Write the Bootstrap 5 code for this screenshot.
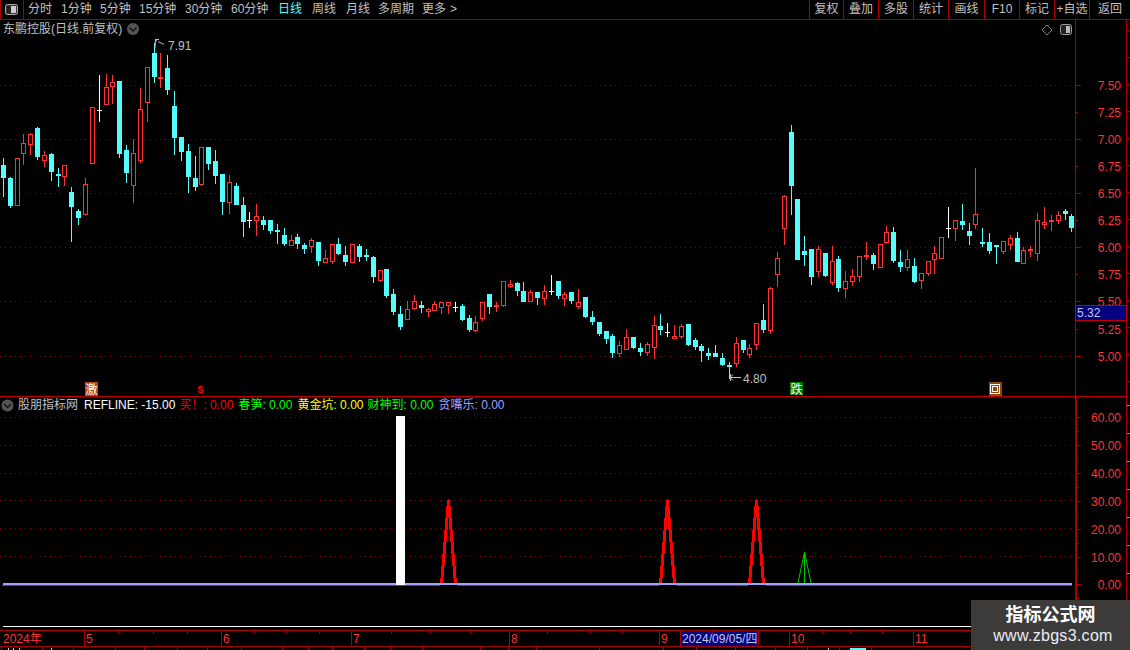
<!DOCTYPE html>
<html lang="zh"><head><meta charset="utf-8"><title>东鹏控股</title>
<link rel="stylesheet" href="https://cdn.jsdelivr.net/npm/bootstrap@5.3.0/dist/css/bootstrap.min.css">
<style>
:root{--fr:#a80000;--lb:#ff3232;--tx:#c0c0c0;}
html,body{background:#000;margin:0;}
.term{width:1130px;height:650px;overflow:hidden;position:relative;background:#000;color:var(--tx);font:12px/1 "Liberation Sans","Noto Sans CJK SC",sans-serif;}
.bar{height:20px;border-bottom:1px solid var(--fr);}
.tog{width:24px;border-right:1px solid var(--fr);border-left:1px solid var(--fr);}
.tl{position:absolute;top:3px;white-space:nowrap;}
.barwrap{position:relative;height:20px;flex:none;}
.rbtn{border-left:1px solid var(--fr);height:19px;line-height:19px;text-align:center;}
.sel{color:#54fcfc;}
.pane{display:flex;flex:none;}
.pane svg{display:block;}
.over{position:absolute;white-space:nowrap;line-height:14px;}
.plot{position:relative;width:1075px;}
text{font:12px "Liberation Sans","Noto Sans CJK SC",sans-serif;}
.lg{display:flex;align-items:center;}
.timeline{height:17px;flex:none;border-top:1px solid var(--fr);border-bottom:1px solid var(--fr);position:relative;color:var(--lb);}
.tlab{position:absolute;top:2px;}
.tsep{position:absolute;top:0;bottom:0;width:1px;background:var(--fr);}
.ttick{position:absolute;top:0;height:3px;width:1px;background:var(--fr);}
.dbox{position:absolute;top:0;bottom:0;left:680px;width:79px;background:#000080;color:#c8c8e8;border-left:1px solid var(--fr);border-right:1px solid var(--fr);padding:2px 0 0 1px;white-space:nowrap;}
.wm{position:absolute;left:971px;top:600px;width:159px;height:50px;background:#3d3a3a;color:#fff;}
.wm1{font-size:18px;line-height:20px;font-weight:700;margin-top:5px;}
.wm2{font-size:16px;line-height:16px;letter-spacing:.3px;margin-top:3px;padding-left:5px;color:#e8eef6;}
.gap3{height:3px;flex:none;}
.foot{height:3px;flex:none;}
.foot svg{display:block;}
</style></head>
<body>
<div class="term d-flex flex-column">
  <div class="bar barwrap d-flex">
    <div class="tog d-flex align-items-center justify-content-center">
      <svg width="14" height="12" viewBox="0 0 14 12"><rect x=".5" y=".5" width="12" height="10" rx="2" fill="#333" stroke="#aaa"/><rect x="6" y="2" width="5" height="7" fill="#ccc"/><rect x="2" y="2" width="4" height="7" fill="#222"/></svg>
    </div>
    <span class="tl" style="left:28px">分时</span>
    <span class="tl" style="left:61px">1分钟</span>
    <span class="tl" style="left:100px">5分钟</span>
    <span class="tl" style="left:139px">15分钟</span>
    <span class="tl" style="left:185px">30分钟</span>
    <span class="tl" style="left:231px">60分钟</span>
    <span class="tl sel" style="left:278px">日线</span>
    <span class="tl" style="left:312px">周线</span>
    <span class="tl" style="left:346px">月线</span>
    <span class="tl" style="left:378px">多周期</span>
    <span class="tl" style="left:422px">更多<span class="ms-1">&gt;</span></span>
    <div class="ms-auto d-flex">
      <div class="rbtn" style="width:34px">复权</div>
      <div class="rbtn" style="width:35px">叠加</div>
      <div class="rbtn" style="width:35px">多股</div>
      <div class="rbtn" style="width:35px">统计</div>
      <div class="rbtn" style="width:36px">画线</div>
      <div class="rbtn" style="width:35px">F10</div>
      <div class="rbtn" style="width:35px">标记</div>
      <div class="rbtn" style="width:35px">+自选</div>
      <div class="rbtn" style="width:41px">返回</div>
    </div>
  </div>
  <div class="pane" style="height:377px">
    <div class="plot">
      <svg id="main" width="1075" height="377" viewBox="0 20 1075 377"></svg>
      <div class="over d-flex align-items-center" style="left:3px;top:2px">东鹏控股(日线.前复权)
        <svg class="ms-1" width="14" height="14" viewBox="0 0 14 14"><circle cx="7" cy="7" r="6" fill="#555"/><path d="M3.5 5.5 7 9l3.5-3.5" fill="none" stroke="#111" stroke-width="1.3"/></svg>
      </div>
    </div>
    <svg id="yaxm" width="55" height="377" viewBox="1075 20 55 377"></svg>
  </div>
  <div class="pane" style="height:230px">
    <div class="plot">
      <svg id="sub" width="1075" height="230" viewBox="0 397 1075 230"></svg>
      <div class="over lg" style="left:1px;top:1px">
        <svg width="13" height="13" viewBox="0 0 13 13"><circle cx="6.5" cy="6.5" r="6" fill="#555"/><path d="M3 5 6.5 8.5 10 5" fill="none" stroke="#111" stroke-width="1.3"/></svg>
        <span class="ms-1">股朋指标网</span>
        <span style="margin-left:6px;color:#fff">REFLINE: -15.00</span>
        <span style="margin-left:4px;color:#f00">买！: 0.00</span>
        <span style="margin-left:5px;color:#0f0">春笋: 0.00</span>
        <span style="margin-left:5px;color:#ff0">黄金坑: 0.00</span>
        <span style="margin-left:4px;color:#0f0">财神到: 0.00</span>
        <span style="margin-left:5px;color:#a0a0ff">贪嘴乐: 0.00</span>
      </div>
    </div>
    <svg id="yaxs" width="55" height="230" viewBox="1075 397 55 230"></svg>
  </div>
  <div class="gap3"></div>
  <div class="timeline" id="tl">
    <span class="tlab" style="left:3px">2024年</span><span class="tlab" style="left:86px">5</span><span class="tlab" style="left:223px">6</span><span class="tlab" style="left:353px">7</span><span class="tlab" style="left:511px">8</span><span class="tlab" style="left:661px">9</span><span class="tlab" style="left:791px">10</span><span class="tlab" style="left:915px">11</span>
    <div class="dbox">2024/09/05/四</div>
  </div>
  <div class="foot"><svg id="ft" width="1130" height="3"></svg></div>
  <div class="wm text-center"><div class="wm1">指标公式网</div><div class="wm2">www.zbgs3.com</div></div>
</div>
<script>
const C=[
'c,165,178,158,197','c,178,206,177,208','r,158,206,158,206','r,143,154,134,165','r,134,145,133,155','c,128,157,127,160','r,155,161,151,167','c,154,172,153,181','c,174,176,168,187','r,165,177,165,186',
'c,192,207,187,242','c,211,218,209,225','r,184,215,178,215','r,107,164,107,164','w,110,111,75,122','r,87,105,74,105','r,82,87,75,104','c,81,154,81,158','c,150,173,145,183','r,153,186,139,203',
'r,109,161,88,163','r,67,103,67,122','c,53,77,43,83','r,77,79,53,88','c,68,90,55,95','c,106,138,91,155','c,137,152,137,161','c,151,177,144,193','c,178,187,156,191','r,147,185,147,186',
'c,147,164,147,170','c,161,176,150,184','c,174,202,174,215','r,182,203,175,214','c,186,205,183,205','c,205,222,197,237','w,220,221,212,228','r,216,221,204,236','c,220,225,216,230','c,220,231,220,234',
'c,230,232,224,244','c,235,244,228,246','r,240,246,235,246','c,237,244,234,249','c,245,249,243,254','r,240,247,238,253','c,242,261,242,266','r,258,263,250,263','r,244,262,244,264','c,244,254,238,255',
'c,255,262,246,266','r,244,263,244,263','c,246,257,244,262','c,255,257,249,261','c,257,277,256,283','r,270,281,270,282','c,269,296,269,298','c,294,312,289,315','c,314,327,306,330','r,309,320,301,320',
'r,301,309,295,310','c,305,308,301,313','r,309,312,308,317','r,304,311,301,311','r,302,308,302,314','r,302,306,302,314','w,307,308,302,312','c,306,320,304,321','c,318,330,315,332','r,322,331,316,332',
'r,302,319,302,321','c,294,307,294,314','r,305,307,302,312','r,281,306,281,307','r,284,287,280,288','c,283,291,282,296','c,291,302,282,302','r,292,302,290,302','c,292,298,292,305','r,291,299,285,305',
'w,291,292,275,295','c,281,296,281,299','r,294,299,292,306','c,292,301,292,304','r,302,307,289,309','c,297,317,297,318','c,317,322,311,325','c,322,334,322,336','c,331,339,331,344','c,336,353,334,358',
'r,345,354,341,357','r,337,350,329,350','c,337,348,337,349','c,348,352,343,356','r,344,353,342,356','r,325,348,316,359','c,326,330,314,335','w,332,333,323,337','r,336,339,325,339','r,326,337,324,339',
'c,324,345,324,346','c,340,347,338,350','c,346,351,344,362','c,353,356,348,360','c,353,357,345,357','c,358,365,353,366','c,365,366,362,379','r,343,364,337,367','c,340,350,340,353','r,348,355,344,358',
'r,323,345,323,350','c,320,330,304,333','r,288,331,287,334','r,258,275,252,287','r,196,229,195,245','c,132,186,125,215','c,199,260,199,260','c,251,255,236,266','c,249,277,249,285','r,249,272,246,277',
'c,253,276,253,277','r,261,283,246,285','c,259,288,256,292','r,281,289,271,298','r,276,282,269,286','r,256,277,256,282','r,255,257,242,260','c,255,264,253,270','r,244,268,244,268','r,232,243,226,244',
'c,232,261,227,263','c,262,267,250,272','r,259,268,250,271','c,266,282,258,283','r,273,281,273,289','r,261,274,261,276','r,253,260,246,274','r,237,259,237,259','w,228,229,207,238','r,220,229,220,241',
'c,221,225,204,230','c,231,236,223,245','r,214,225,168,229','c,242,244,228,247','c,242,251,233,254','c,245,247,245,264','r,241,252,241,254','r,238,245,235,250','c,238,262,232,262','r,250,264,247,264',
'r,249,251,246,257','r,220,254,213,261','r,222,225,207,229','r,220,222,215,231','r,215,221,211,224','c,211,214,209,220','c,216,228,214,232'];
const CY='#54fcfc',RD='#ff3232',FR='#a80000',LB='#ff3232';
let s='';
[85,139,193,247,301,356].forEach(y=>s+=`<line x1="0" x2="1075" y1="${y+.5}" y2="${y+.5}" stroke="#8c0000" stroke-dasharray="1 4"/>`);
C.forEach((d,i)=>{
 const [t,a,b,h,l]=d.split(',');const T=+a,B=+b,H=+h,L=+l;
 const x=Math.floor(3.3+6.85*i);
 const col=t=='c'?CY:t=='r'?RD:'#fff';
 if(t=='w'){s+=`<rect x="${x}" y="${H}" width="1" height="${L-H}" fill="#fff"/><rect x="${x-2}" y="${T}" width="5" height="1" fill="#fff"/>`;return;}
 s+=`<rect x="${x}" y="${H}" width="1" height="${Math.max(L-H,1)}" fill="${col}"/>`;
 if(t=='c')s+=`<rect x="${x-2}" y="${T}" width="5" height="${Math.max(B-T,2)}" fill="${CY}"/>`;
 else s+=`<rect x="${x-1.5}" y="${T+.5}" width="4" height="${Math.max(B-T-1,1)}" fill="#000" stroke="${RD}"/>`;
});
s+=`<path d="M155 42.5 157 39.5M155 39.5h4M155.5 40 155 48" stroke="#c0c0c0" fill="none"/><path d="M158 42c3 0 3 2 6 2" stroke="#c0c0c0" fill="none"/><text x="168" y="50" fill="#c0c0c0">7.91</text>`;
s+=`<path d="M730.5 374V381M730 377.5h11M730 377.5l3-3M730 377.5l3 3" stroke="#c0c0c0" fill="none"/><text x="743" y="383" fill="#c0c0c0">4.80</text>`;
s+=`<rect x="85" y="382" width="13" height="14" fill="#b04a10"/><text x="85.5" y="394" fill="#fff">激</text>`;
s+=`<text x="197" y="393" fill="#f00" style="font-weight:700;font-family:'Liberation Mono',monospace;font-size:11.5px">$</text>`;
s+=`<rect x="790" y="382" width="13" height="13" fill="#007a00"/><text x="790.5" y="393.5" fill="#fff">跌</text>`;
s+=`<rect x="989" y="382" width="13" height="14" fill="#8a4a10"/><rect x="990.5" y="384.5" width="9" height="9" fill="none" stroke="#fff"/><rect x="992.5" y="386.5" width="5" height="5" fill="#8a4a10" stroke="#fff"/>`;
s+=`<path d="M1047 25l5 5-5 5-5-5z" fill="none" stroke="#888"/><rect x="1060.5" y="24.5" width="11" height="10" rx="2" fill="#222" stroke="#999"/><rect x="1066" y="26" width="4" height="7" fill="#bbb"/>`;
s+=`<line x1="0" x2="1075" y1="396.5" y2="396.5" stroke="#c00000"/>`;
document.getElementById('main').innerHTML=s;

let a=`<rect x="1075" y="20" width="1" height="377" fill="${FR}"/><rect x="1126" y="20" width="1" height="377" fill="${FR}"/>`;
[['7.50',85],['7.25',112],['7.00',139],['6.75',166],['6.50',193],['6.25',220],['6.00',247],['5.75',274],['5.50',301],['5.25',329],['5.00',356]].forEach(([t,y],i)=>{
 a+=`<rect x="1076" y="${y}" width="${i%2?2:5}" height="1" fill="${FR}"/><text x="1121" y="${y+5}" text-anchor="end" fill="${LB}">${t}</text>`;
});
for(let y=30;y<397;y+=27)a+=`<rect x="1127" y="${y}" width="3" height="1" fill="${FR}"/>`;
a+=`<rect x="1075.5" y="305.5" width="51" height="15" fill="#000080" stroke="#c00000"/><text x="1077" y="317" fill="#c8c8e8">5.32</text>`;
a+=`<line x1="1075" x2="1127" y1="396.5" y2="396.5" stroke="#c00000"/>`;
document.getElementById('yaxm').innerHTML=a;

let u='';
[417,445,473,500,528,556].forEach(y=>u+=`<line x1="0" x2="1075" y1="${y+.5}" y2="${y+.5}" stroke="#8c0000" stroke-dasharray="1 4"/>`);
u+=`<rect x="396" y="416" width="9" height="169" fill="#fff"/>`;
u+=`<rect x="2" y="585" width="1070" height="1" fill="#e01020"/>`;
u+=`<rect x="440" y="585" width="18" height="1" fill="#000"/><rect x="659" y="585" width="18" height="1" fill="#000"/><rect x="748" y="585" width="18" height="1" fill="#000"/>`;
[448,667,756].forEach(x=>{
 u+=`<rect x="${x}" y="499" width="1" height="1" fill="#f00"/><rect x="${x-1}" y="500" width="3" height="6" fill="#f00"/>`;
 [506,518,530,542,554,566,578].forEach((y,k)=>{
  const h=k==6?5:12;
  u+=`<rect x="${x-2-k}" y="${y}" width="3" height="${h}" fill="#f00"/><rect x="${x+k}" y="${y}" width="3" height="${h}" fill="#f00"/>`;
 });
});
u+=`<path d="M798 583L804.5 552L811 583M804.5 552V583" fill="none" stroke="#0c0" stroke-width="1"/>`;
u+=`<rect x="3" y="583" width="393" height="2" fill="#a0a0ff"/><rect x="405" y="583" width="667" height="2" fill="#a0a0ff"/>`;
u+=`<rect x="3" y="626" width="1072" height="1" fill="#fff"/>`;
document.getElementById('sub').innerHTML=u;
let v=`<rect x="1075" y="397" width="2" height="230" fill="${FR}"/><rect x="1126" y="397" width="1" height="230" fill="${FR}"/>`;
[['60.00',417],['50.00',445],['40.00',473],['30.00',501],['20.00',529],['10.00',557],['0.00',584]].forEach(([t,y])=>{
 v+=`<rect x="1077" y="${y}" width="4" height="1" fill="${FR}"/><rect x="1077" y="${y+14}" width="2" height="1" fill="${FR}"/><text x="1121" y="${y+5}" text-anchor="end" fill="${LB}">${t}</text>`;
});
for(let y=405;y<627;y+=28)v+=`<rect x="1127" y="${y}" width="3" height="1" fill="#888"/>`;
v+=`<rect x="1075" y="626" width="55" height="1" fill="#fff"/>`;
document.getElementById('yaxs').innerHTML=v;

const tl=document.getElementById('tl');let h='';
[84,221,351,509,659,789,913].forEach(x=>h+=`<i class="tsep" style="left:${x}px"></i>`);
[118,153,187,254,286,319,391,430,470,547,590,622,712,822,850,882].forEach(x=>h+=`<i class="ttick" style="left:${x}px"></i>`);
tl.insertAdjacentHTML('beforeend',h);
let f='';
[1,42,73,115,144,177,207,241,282,308,332,364,390,422,480,508,536,599,663,696,735,775,807,839,871].forEach(x=>f+=`<rect x="${x}" y="0" width="1" height="3" fill="${FR}"/>`);
[[8,1],[13,1],[19,1],[51,1],[828,1]].forEach(([x,w])=>f+=`<rect x="${x}" y="1" width="${w}" height="2" fill="#ccc"/>`);
f+=`<rect x="850" y="1" width="16" height="2" fill="#54fcfc"/>`;
document.getElementById('ft').innerHTML=f;
</script>
<script src="https://cdn.jsdelivr.net/npm/bootstrap@5.3.0/dist/js/bootstrap.bundle.min.js"></script>
</body></html>
